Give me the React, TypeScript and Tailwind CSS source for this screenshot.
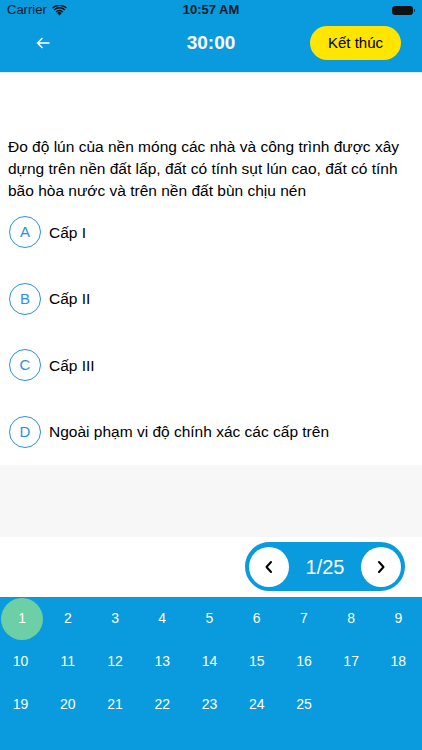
import React from 'react'

const options = [
  { key: 'A', text: 'Cấp I' },
  { key: 'B', text: 'Cấp II' },
  { key: 'C', text: 'Cấp III' },
  { key: 'D', text: 'Ngoài phạm vi độ chính xác các cấp trên' },
]

const numbers = Array.from({ length: 25 }, (_, i) => i + 1)

function StatusBar() {
  return (
    <div className="relative flex h-[20px] items-center justify-between px-[7px] text-[13px]">
      <div className="flex items-center gap-[5px] text-[#0d1b2a]">
        <span>Carrier</span>
        <svg width="15" height="11" viewBox="0 0 15 11">
          <path d="M7.5 10.5 L5.2 8 A3.3 3.3 0 0 1 9.8 8 Z" fill="#111" />
          <path d="M3.6 6.4 A5.6 5.6 0 0 1 11.4 6.4 L10.3 7.5 A4.1 4.1 0 0 0 4.7 7.5 Z" fill="#111" />
          <path d="M1.6 4.4 A8.4 8.4 0 0 1 13.4 4.4 L12.3 5.5 A6.9 6.9 0 0 0 2.7 5.5 Z" fill="#111" />
          <path d="M0 2.6 A10.8 10.8 0 0 1 15 2.6 L14 3.6 A9.4 9.4 0 0 0 1 3.6 Z" fill="#111" />
        </svg>
      </div>
      <span className="absolute left-1/2 -translate-x-1/2 font-semibold text-[#0d1b2a]">10:57 AM</span>
      <div className="flex items-center">
        <div className="h-[9px] w-[21px] rounded-[2.5px] border border-[#111] bg-[#111]" />
        <div className="ml-[1px] h-[3px] w-[1px] bg-[#333]" />
      </div>
    </div>
  )
}

export default function App() {
  return (
    <div className="flex h-[750px] w-full flex-col overflow-hidden bg-white" style={{ fontFamily: '"Liberation Sans", Arial, sans-serif' }}>
      <div className="bg-[#0a9ade]">
        <StatusBar />
        <div className="relative flex h-[52px] items-center px-[36px] pb-[6px]">
          <svg width="14" height="12" viewBox="0 0 14 12" fill="none" stroke="white" strokeWidth="1.5" strokeLinecap="round" strokeLinejoin="round">
            <path d="M13 6H1.5M6 1.5L1.5 6L6 10.5" />
          </svg>
          <span className="absolute left-1/2 top-[9px] -translate-x-1/2 text-[19px] font-semibold text-white">30:00</span>
          <button className="ml-auto mr-[-15px] flex h-[34px] w-[91px] items-center justify-center rounded-full bg-[#ffe500] text-[15px] text-black">
            Kết thúc
          </button>
        </div>
      </div>
      <div className="h-[1px] bg-[#dbeefa]" />

      <div className="h-[126px] px-[8px] pt-[63px]">
        <p className="text-[15.5px] leading-[22px] text-black">
          Đo độ lún của nền móng các nhà và công trình được xây dựng trên nền đất lấp, đất có tính sụt lún cao, đất có tính bão hòa nước và trên nền đất bùn chịu nén
        </p>
      </div>

      <div className="flex flex-col px-[9px]">
        {options.map((o) => (
          <div key={o.key} className="flex h-[66.5px] items-center gap-[8px]">
            <div className="flex h-[32px] w-[32px] items-center justify-center rounded-full border border-[#2a8fe8] text-[15px] text-[#2a8fe8]">
              {o.key}
            </div>
            <span className="text-[15.5px] text-black">{o.text}</span>
          </div>
        ))}
      </div>

      <div className="flex-1 bg-[#f7f7f8]" />

      <div className="flex h-[60px] justify-end pr-[17px] pt-[5px]">
        <div className="flex h-[49px] w-[160px] items-center justify-between rounded-full border-[3px] border-[#0a9ade] bg-[#0a9ade] px-[1px]">
          <div className="flex h-[40px] w-[40px] items-center justify-center rounded-full bg-white">
            <svg width="10" height="14" viewBox="0 0 10 14" fill="none" stroke="black" strokeWidth="2" strokeLinecap="round" strokeLinejoin="round">
              <path d="M7 2L2.5 7L7 12" />
            </svg>
          </div>
          <span className="text-[20px] text-white">1/25</span>
          <div className="flex h-[40px] w-[40px] items-center justify-center rounded-full bg-white">
            <svg width="10" height="14" viewBox="0 0 10 14" fill="none" stroke="black" strokeWidth="2" strokeLinecap="round" strokeLinejoin="round">
              <path d="M3 2L7.5 7L3 12" />
            </svg>
          </div>
        </div>
      </div>

      <div className="h-[153px] bg-[#0a9ade]">
        <div className="ml-[-3px] grid w-[425px] grid-cols-9 content-start">
          {numbers.map((n) => (
            <div key={n} className="flex h-[43px] items-center justify-center">
              <div
                className={
                  n === 1
                    ? 'ml-[3px] flex h-[42px] w-[42px] items-center justify-center rounded-full bg-[#6dcfa5] text-[14px] text-white'
                    : 'flex h-[42px] w-[42px] items-center justify-center text-[14px] text-white'
                }
              >
                {n}
              </div>
            </div>
          ))}
        </div>
      </div>
    </div>
  )
}
